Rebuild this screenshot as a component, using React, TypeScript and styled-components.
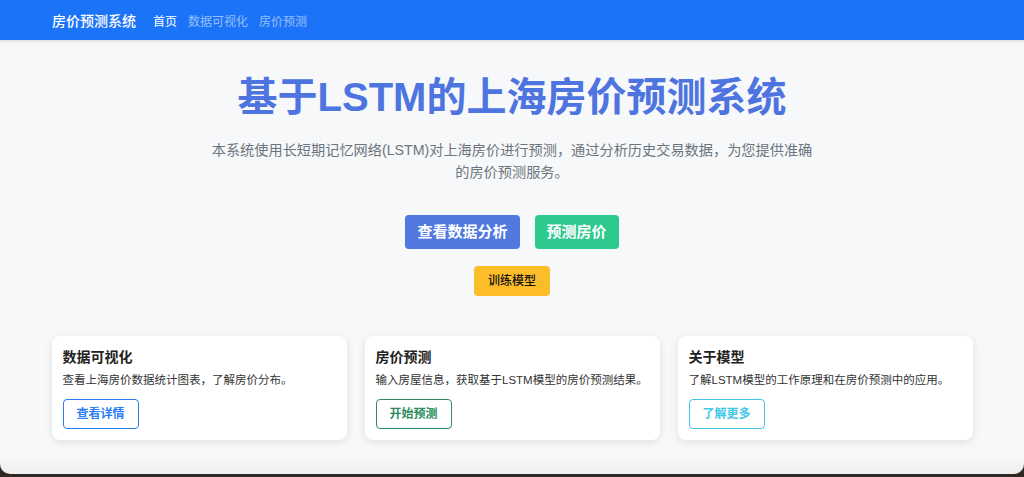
import styled, { createGlobalStyle } from "styled-components";

const GlobalStyle = createGlobalStyle`
  html, body {
    margin: 0;
    padding: 0;
    background: #2f2823;
  }
  body {
    font-family: "Liberation Sans", "Noto Sans CJK SC", sans-serif;
    color: #212529;
  }
  * {
    box-sizing: border-box;
  }
`;

const Frame = styled.div`
  height: 474px;
  background: #f7f8fa;
  border-radius: 0 0 10px 10px;
  overflow: hidden;
  display: flex;
  flex-direction: column;
  box-shadow: inset 0 -18px 16px -14px rgba(0, 0, 0, 0.06);
`;

const Navbar = styled.nav`
  height: 40px;
  flex-shrink: 0;
  background: #1b74f7;
  display: flex;
  align-items: center;
  padding: 0 52px;
  box-shadow: 0 1px 3px rgba(0, 0, 0, 0.15);
`;

const Brand = styled.a`
  color: #fff;
  font-size: 14px;
  font-weight: 500;
  margin-right: 17px;
`;

const NavLink = styled.a<{ $active?: boolean }>`
  color: ${(p) => (p.$active ? "#fff" : "rgba(255, 255, 255, 0.55)")};
  font-size: 12px;
  margin-right: 11px;
`;

const Hero = styled.section`
  display: flex;
  flex-direction: column;
  align-items: center;
  padding-top: 33px;
`;

const Title = styled.h1`
  margin: 0;
  font-size: 40px;
  line-height: 48px;
  font-weight: 700;
  color: #4e74df;
`;

const Lead = styled.p`
  margin: 18px 0 0;
  max-width: 608px;
  text-align: center;
  font-size: 14.2px;
  line-height: 22px;
  color: #6c757d;
`;

const ButtonRow = styled.div`
  display: flex;
  gap: 15px;
  margin-top: 32px;
`;

const BigButton = styled.button<{ $bg: string }>`
  border: none;
  border-radius: 4px;
  background: ${(p) => p.$bg};
  color: #fff;
  font-family: inherit;
  font-size: 15px;
  font-weight: 600;
  line-height: 22px;
  padding: 6px 12px;
`;

const TrainButton = styled.button`
  margin-top: 17px;
  border: none;
  border-radius: 4px;
  background: #fdbd2b;
  color: #111;
  font-family: inherit;
  font-size: 12px;
  font-weight: 500;
  line-height: 18px;
  padding: 6px 13.5px;
`;

const Cards = styled.div`
  display: grid;
  grid-template-columns: repeat(3, 295px);
  gap: 18px;
  justify-content: center;
  margin-top: 40px;
`;

const Card = styled.div`
  background: #fff;
  border-radius: 8px;
  box-shadow: 0 2px 8px rgba(0, 0, 0, 0.1);
  padding: 11px;
  height: 104px;
`;

const CardTitle = styled.h5`
  margin: 0;
  font-size: 14px;
  line-height: 20px;
  font-weight: 600;
  color: #222;
`;

const CardText = styled.p`
  margin: 4px 0 10px;
  font-size: 11.5px;
  line-height: 18px;
  color: #333;
  white-space: nowrap;
`;

const OutlineButton = styled.button<{ $color: string }>`
  background: #fff;
  border: 1px solid ${(p) => p.$color};
  color: ${(p) => p.$color};
  border-radius: 4px;
  font-family: inherit;
  font-size: 12px;
  font-weight: 600;
  line-height: 18px;
  padding: 5px 13px;
`;

const features = [
  {
    title: "数据可视化",
    text: "查看上海房价数据统计图表，了解房价分布。",
    action: "查看详情",
    color: "#2a7df5",
  },
  {
    title: "房价预测",
    text: "输入房屋信息，获取基于LSTM模型的房价预测结果。",
    action: "开始预测",
    color: "#2b8c5c",
  },
  {
    title: "关于模型",
    text: "了解LSTM模型的工作原理和在房价预测中的应用。",
    action: "了解更多",
    color: "#3fc6ea",
  },
];

const App = () => {
  return (
    <>
      <GlobalStyle />
      <Frame>
        <Navbar>
          <Brand>房价预测系统</Brand>
          <NavLink $active>首页</NavLink>
          <NavLink>数据可视化</NavLink>
          <NavLink>房价预测</NavLink>
        </Navbar>
        <Hero>
          <Title>基于LSTM的上海房价预测系统</Title>
          <Lead>
            本系统使用长短期记忆网络(LSTM)对上海房价进行预测，通过分析历史交易数据，为您提供准确的房价预测服务。
          </Lead>
          <ButtonRow>
            <BigButton $bg="#5179df">查看数据分析</BigButton>
            <BigButton $bg="#2ec98e">预测房价</BigButton>
          </ButtonRow>
          <TrainButton>训练模型</TrainButton>
        </Hero>
        <Cards>
          {features.map((f) => (
            <Card key={f.title}>
              <CardTitle>{f.title}</CardTitle>
              <CardText>{f.text}</CardText>
              <OutlineButton $color={f.color}>{f.action}</OutlineButton>
            </Card>
          ))}
        </Cards>
      </Frame>
    </>
  );
};

export default App;
